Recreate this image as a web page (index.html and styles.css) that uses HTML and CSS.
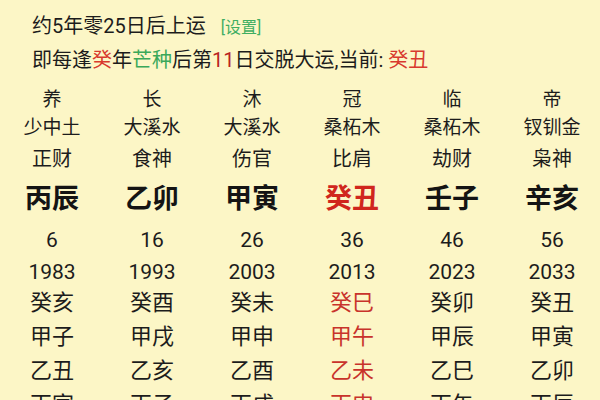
FILE: index.html
```html
<!DOCTYPE html>
<html lang="zh-CN">
<head>
<meta charset="utf-8">
<link rel="stylesheet" href="styles.css">
</head>
<body>
<div class="page">
  <div class="info">
    <div class="line">约5年零25日后上运<span class="set">[设置]</span></div>
    <div class="line">即每逢<span class="red">癸</span>年<span class="green">芒种</span>后第<span class="dred">11</span>日交脱大运,当前: <span class="red">癸丑</span></div>
  </div>
  <div class="table">
    <div class="row r-stage"><span>养</span><span>长</span><span>沐</span><span>冠</span><span>临</span><span>帝</span></div>
    <div class="row r-nayin"><span>少中土</span><span>大溪水</span><span>大溪水</span><span>桑柘木</span><span>桑柘木</span><span>钗钏金</span></div>
    <div class="row r-god"><span>正财</span><span>食神</span><span>伤官</span><span>比肩</span><span>劫财</span><span>枭神</span></div>
    <div class="row r-pillar"><span>丙辰</span><span>乙卯</span><span>甲寅</span><span class="cur">癸丑</span><span>壬子</span><span>辛亥</span></div>
    <div class="row r-age"><span>6</span><span>16</span><span>26</span><span>36</span><span>46</span><span>56</span></div>
    <div class="row r-year"><span>1983</span><span>1993</span><span>2003</span><span>2013</span><span>2023</span><span>2033</span></div>
    <div class="row r-gz"><span>癸亥</span><span>癸酉</span><span>癸未</span><span class="hl">癸巳</span><span>癸卯</span><span>癸丑</span></div>
    <div class="row r-gz"><span>甲子</span><span>甲戌</span><span>甲申</span><span class="hl">甲午</span><span>甲辰</span><span>甲寅</span></div>
    <div class="row r-gz"><span>乙丑</span><span>乙亥</span><span>乙酉</span><span class="hl">乙未</span><span>乙巳</span><span>乙卯</span></div>
    <div class="row r-gz"><span>丙寅</span><span>丙子</span><span>丙戌</span><span class="hl">丙申</span><span>丙午</span><span>丙辰</span></div>
  </div>
</div>
</body>
</html>
```

FILE: styles.css
```css
html, body {
  margin: 0;
  padding: 0;
  background: #fcf6c6;
  overflow: hidden;
}
body {
  width: 600px;
  height: 400px;
  font-family: Roboto, "Noto Sans CJK SC", sans-serif;
  color: #1c1c1c;
}
.page {
  width: 600px;
  height: 400px;
  overflow: hidden;
}
.info {
  padding: 9px 0 0 32px;
}
.line {
  font-size: 20px;
  line-height: 34px;
  height: 34px;
  white-space: nowrap;
}
.set {
  font-size: 16px;
  color: #3fae62;
  margin-left: 15px;
}
.red { color: #d8392e; }
.dred { color: #b8241e; }
.green { color: #3aa85a; }

.table {
  margin-top: 9px;
  padding-left: 2px;
}
.row {
  display: grid;
  grid-template-columns: repeat(6, 100px);
  text-align: center;
  white-space: nowrap;
}
.r-stage { font-size: 19px; height: 28px; line-height: 28px; }
.r-nayin { font-size: 19px; height: 28px; line-height: 28px; }
.r-god { font-size: 20px; height: 34px; line-height: 34px; }
.r-pillar { font-size: 27px; font-weight: bold; height: 46px; line-height: 46px; color: #141414; }
.r-age { font-size: 21px; height: 36px; line-height: 36px; }
.r-year { font-size: 21px; height: 28px; line-height: 28px; }
.r-gz { font-size: 22px; height: 34px; line-height: 34px; }
.cur { color: #d0261d; }
.hl { color: #c8332b; }
```
